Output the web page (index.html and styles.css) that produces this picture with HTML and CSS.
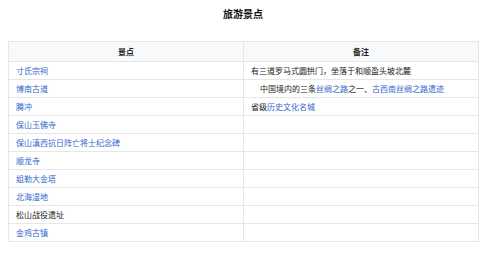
FILE: index.html
```html
<!DOCTYPE html>
<html lang="zh">
<head>
<meta charset="utf-8">
<link rel="stylesheet" href="styles.css">
</head>
<body>
<h1 class="title">旅游景点</h1>
<table class="sights">
  <thead>
    <tr><th>景点</th><th>备注</th></tr>
  </thead>
  <tbody>
    <tr><td><a href="#">寸氏宗祠</a></td><td>有三道罗马式圆拱门，坐落于和顺盈头坡北麓</td></tr>
    <tr><td><a href="#">博南古道</a></td><td><span class="indent">中国境内的三条<a href="#">丝绸之路</a>之一、<a href="#">古西南丝绸之路遗迹</a></span></td></tr>
    <tr><td><a href="#">腾冲</a></td><td>省级<a href="#">历史文化名城</a></td></tr>
    <tr><td><a href="#">保山玉佛寺</a></td><td></td></tr>
    <tr><td><a href="#">保山滇西抗日阵亡将士纪念碑</a></td><td></td></tr>
    <tr><td><a href="#">顺龙寺</a></td><td></td></tr>
    <tr><td><a href="#">姐勒大金塔</a></td><td></td></tr>
    <tr><td><a href="#">北海湿地</a></td><td></td></tr>
    <tr><td>松山战役遗址</td><td></td></tr>
    <tr><td><a href="#">金鸡古镇</a></td><td></td></tr>
  </tbody>
</table>
</body>
</html>
```

FILE: styles.css
```css
html, body {
  margin: 0;
  padding: 0;
  background: #fff;
}
body {
  padding: 8px 0 0 8px;
  font-family: "Noto Sans CJK SC", "Noto Sans", sans-serif;
  color: #222;
}
.title {
  margin: 0 0 21px 0;
  width: 470px;
  text-align: center;
  font-size: 10px;
  line-height: 12px;
  font-weight: bold;
  color: #111;
}
.sights {
  width: 471px;
  border-collapse: collapse;
  table-layout: fixed;
  font-size: 8px;
}
.sights th,
.sights td {
  border: 1px solid #e6e6e6;
  padding: 0 7px;
  text-align: left;
  line-height: 17px;
  height: 17px;
  white-space: nowrap;
}
.sights th {
  background: #f8f9fa;
  text-align: center;
  font-weight: bold;
  line-height: 19px;
  height: 19px;
  color: #222;
}
.sights a {
  color: #3366cc;
  text-decoration: none;
}
.indent {
  padding-left: 9px;
}
```
